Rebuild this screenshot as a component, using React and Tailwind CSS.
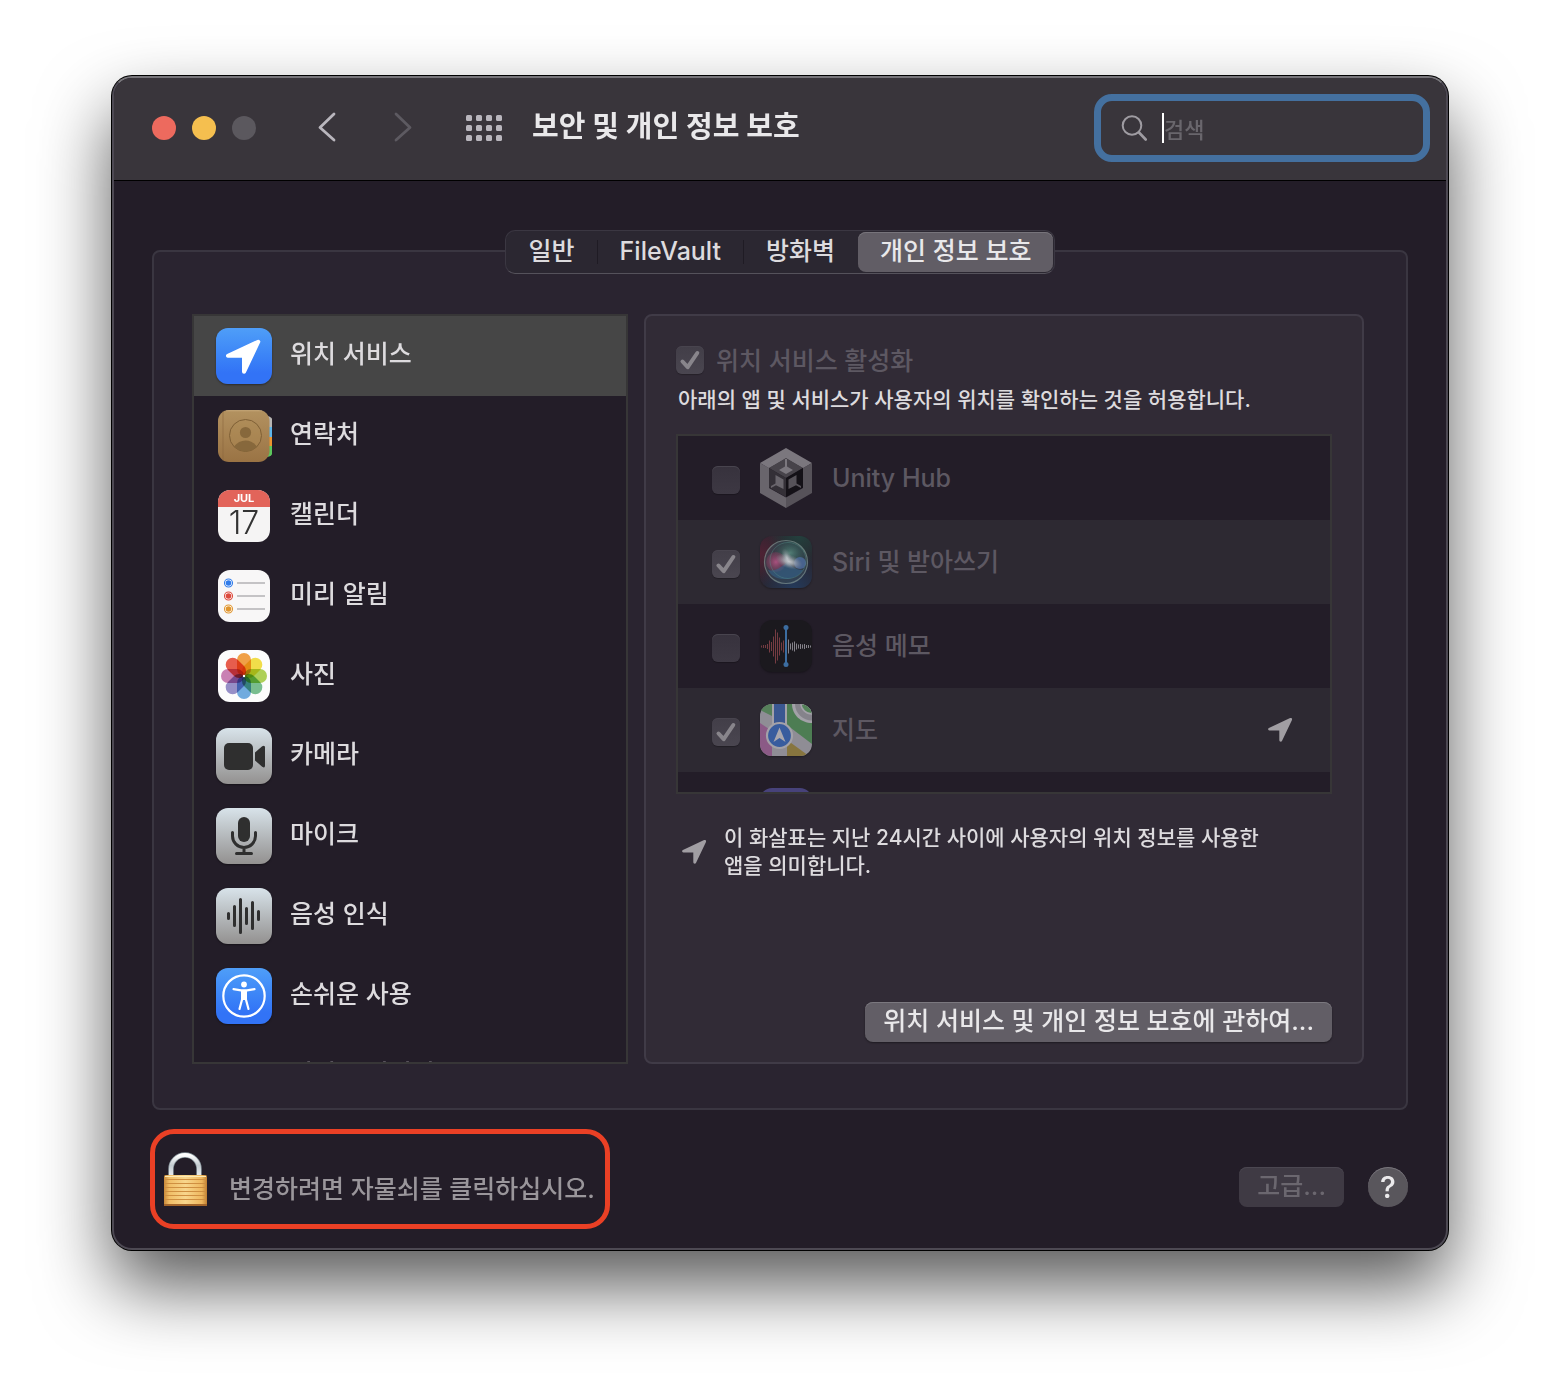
import { useState } from "react"
import clsx from "clsx"

const tabs = ["일반", "FileVault", "방화벽", "개인 정보 보호"]

const categories = [
  { name: "위치 서비스", Icon: LocationIcon },
  { name: "연락처", Icon: ContactsIcon },
  { name: "캘린더", Icon: CalendarIcon },
  { name: "미리 알림", Icon: RemindersIcon },
  { name: "사진", Icon: PhotosIcon },
  { name: "카메라", Icon: CameraIcon },
  { name: "마이크", Icon: MicrophoneIcon },
  { name: "음성 인식", Icon: SpeechIcon },
  { name: "손쉬운 사용", Icon: AccessibilityIcon },
  { name: "입력 모니터링", Icon: null },
]

const apps = [
  { name: "Unity Hub", allowed: false, recent: false, Icon: UnityIcon },
  { name: "Siri 및 받아쓰기", allowed: true, recent: false, Icon: SiriIcon },
  { name: "음성 메모", allowed: false, recent: false, Icon: VoiceMemoIcon },
  { name: "지도", allowed: true, recent: true, Icon: MapsIcon },
]

function App() {
  return (
    <div className="min-h-screen overflow-hidden bg-white px-28 pt-19 pb-37 font-['Inter','Noto_Sans_CJK_KR',sans-serif] text-[25px] leading-8 font-medium text-[#dddbde]">
      <div className="overflow-hidden rounded-[20px] border-2 border-[#4d4953] border-t-[#77757a] bg-[#231d28] shadow-[0_0_0_1px_#000,0_36px_72px_rgba(0,0,0,0.66)]">
        <TitleBar/>
        <main className="px-[38px] pt-[49px]">
          <Tabs/>
          <section className="-mt-6 flex gap-4 rounded-lg border-2 border-[#3a3641] bg-[#2a2430] pt-[62px] pr-[42px] pb-11 pl-[38px]">
            <CategoryList/>
            <LocationPanel/>
          </section>
        </main>
        <Footer/>
      </div>
    </div>
  )
}

function TitleBar() {
  return (
    <header className="flex items-center border-b border-black bg-[#39353b] pt-4 pr-4 pb-[18px] pl-[38px]">
      <div className="flex gap-4">
        <button aria-label="닫기" className="size-6 rounded-full bg-[#ed6a5e]"/>
        <button aria-label="최소화" className="size-6 rounded-full bg-[#f5bf4f]"/>
        <button aria-label="확대" className="size-6 rounded-full bg-[#5b585e]"/>
      </div>
      <nav className="ml-14 flex items-center gap-[45px]">
        <button aria-label="뒤로" className="text-[#b9b6bd]">
          <Chevron d="M22 2 8 15.500 22 28"/>
        </button>
        <button aria-label="앞으로" disabled className="text-[#5d5a61]">
          <Chevron d="M7 2 21 15.500 7 28"/>
        </button>
        <button aria-label="모두 보기" className="text-[#b9b6bd]">
          <svg viewBox="0 0 36 26" className="h-[26px] w-9" fill="currentColor">
            {[0, 10, 20].map(y => [0, 10, 20, 30].map(x => (
              <rect key={`${x}-${y}`} x={x} y={y} width="6" height="6" rx="1.5"/>
            )))}
          </svg>
        </button>
      </nav>
      <h1 className="ml-[30px] pb-0.5 text-[29px] leading-9 font-bold text-[#e9e8ea]">보안 및 개인 정보 보호</h1>
      <label className="ml-auto flex h-[68px] w-84 items-center rounded-[18px] border-[7px] border-[#44709f] pl-5">
        <svg viewBox="0 0 26 26" className="size-[26px] text-[#9f9ca2]" fill="none" stroke="currentColor" strokeLinecap="round">
          <circle cx="11" cy="10.500" r="9.300" strokeWidth="2"/>
          <path d="m18 17.500 6.700 7" strokeWidth="2.600"/>
        </svg>
        <span className="ml-[15px] h-[30px] w-0.5 bg-white"/>
        <input type="text" aria-label="검색" placeholder="검색" className="min-w-0 flex-1 bg-transparent pt-1 text-[22px] outline-none placeholder:text-[#69666c]"/>
      </label>
    </header>
  )
}

function Chevron({ d }) {
  return (
    <svg viewBox="0 0 32 32" className="size-8" fill="none" stroke="currentColor" strokeWidth="2.800" strokeLinecap="round" strokeLinejoin="round">
      <path d={d}/>
    </svg>
  )
}

function Tabs() {
  const [active, setActive] = useState("개인 정보 보호");

  return (
    <div role="tablist" className="relative mx-auto flex w-fit items-center rounded-[10px] border border-[#3b3742] border-b-[#55525b] bg-[#2b2731] p-px">
      {tabs.map((tab, i) => (
        <div key={tab} className="flex items-center">
          {i > 0 && <span className={clsx("h-6 w-px", tab !== active && tabs[i - 1] !== active && "bg-[#1f1b24]")}/>}
          <button
            role="tab"
            aria-selected={tab === active}
            onClick={() => setActive(tab)}
            className={clsx(
              "flex h-10 items-center px-[22px]",
              tab === active && "rounded-lg bg-[#615d65] text-[#e9e8ea] shadow-[inset_0_1px_0_#77747b]",
            )}
          >
            <span className="pb-0.5">{tab}</span>
          </button>
        </div>
      ))}
    </div>
  )
}

function CategoryList() {
  const [selected, setSelected] = useState("위치 서비스");

  return (
    <ul className="h-[750px] w-[436px] shrink-0 overflow-hidden border-2 border-[#373637] bg-[#231d28]">
      {categories.map(({ name, Icon }) => (
        <li key={name}>
          <button
            onClick={() => setSelected(name)}
            className={clsx("flex h-20 w-full items-center gap-[18px] pl-[22px] text-left", name === selected && "bg-[#464646]")}
          >
            <span className="flex size-14 items-center justify-center">{Icon && <Icon/>}</span>
            <span className="pb-1">{name}</span>
          </button>
        </li>
      ))}
    </ul>
  )
}

function LocationPanel() {
  return (
    <div className="flex min-w-0 flex-1 flex-col rounded-lg border-2 border-[#403b47] bg-[#312b36] px-[30px] pb-5">
      <label className="mt-[26px] flex h-9 items-center gap-3 text-[#5d5862]">
        <Checkbox checked/>
        <span className="pt-0.5">위치 서비스 활성화</span>
      </label>
      <p className="mt-2 pl-0.5 text-[21px] leading-7">아래의 앱 및 서비스가 사용자의 위치를 확인하는 것을 허용합니다.</p>
      <ul className="mt-5 h-[360px] overflow-hidden border-2 border-[#373637] bg-[#231d28]">
        {apps.map(app => <AppRow key={app.name} app={app}/>)}
        <li className="flex h-21 items-center pl-[82px]">
          <span className="size-[52px] rounded-xl bg-[#47427a]"/>
        </li>
      </ul>
      <div className="mt-[30px] flex items-center gap-4 pr-10 pl-1">
        <LocationArrow className="size-7 shrink-0 text-[#a19ea3]"/>
        <p className="text-[21px] leading-7 break-keep">이 화살표는 지난 24시간 사이에 사용자의 위치 정보를 사용한 앱을 의미합니다.</p>
      </div>
      <button className="mt-auto flex h-10 items-center self-end rounded-lg bg-[#625e66] px-[18px] text-[#e9e8ea] shadow-[inset_0_1px_0_#7b787f,0_1px_2px_rgba(0,0,0,0.4)]">
        <span className="pb-0.5">위치 서비스 및 개인 정보 보호에 관하여...</span>
      </button>
    </div>
  )
}

function AppRow({ app }) {
  const { name, allowed, recent, Icon } = app;

  return (
    <li className="flex h-21 items-center pr-9 pl-[34px] even:bg-[#2d2932]">
      <label className="flex items-center text-[#5d5862]">
        <span className="pt-1"><Checkbox checked={allowed}/></span>
        <span className="mr-5 ml-5 flex w-[52px] justify-center"><Icon/></span>
        <span>{name}</span>
      </label>
      {recent && <LocationArrow className="ml-auto size-7 text-[#a19ea3]"/>}
    </li>
  )
}

function Checkbox({ checked }) {
  return (
    <span className="relative block size-7">
      <input
        type="checkbox"
        defaultChecked={checked}
        disabled
        className="peer block size-7 appearance-none rounded-md bg-linear-to-b from-[#37323d] to-[#3d3843] shadow-[inset_0_1px_0_#48444e,0_1px_1px_rgba(0,0,0,0.25)] checked:from-[#423e48] checked:to-[#4a4650]"
      />
      <svg viewBox="0 0 28 28" className="pointer-events-none absolute inset-0 hidden size-7 text-[#88858b] peer-checked:block" fill="none" stroke="currentColor" strokeWidth="4" strokeLinecap="round" strokeLinejoin="round">
        <path d="m6.500 15.500 5.200 5.700L21.300 7"/>
      </svg>
    </span>
  )
}

function Footer() {
  return (
    <footer className="flex items-center pt-[19px] pr-[38px] pb-[19px] pl-9">
      <button className="flex h-25 items-center rounded-[24px] border-5 border-[#ea4025] pr-2.5 pl-[9px] text-[#9a969b]">
        <LockIcon/>
        <span className="ml-[22px] pt-5">변경하려면 자물쇠를 클릭하십시오.</span>
      </button>
      <div className="mt-4 ml-auto flex items-center gap-6">
        <button disabled className="flex h-10 items-center rounded-lg bg-[#3f3a44] px-[18px] text-[#6b676f] shadow-[inset_0_1px_0_#4b4751]">
          <span className="pb-0.5">고급...</span>
        </button>
        <button aria-label="도움말" className="size-10 rounded-full bg-[#59565c] text-[30px] leading-10 text-[#ebeaec] shadow-[inset_0_1px_0_#77747b]">?</button>
      </div>
    </footer>
  )
}

function LocationArrow({ className }) {
  return (
    <svg viewBox="7 9 40 40" className={className} fill="currentColor" stroke="currentColor" strokeWidth="4" strokeLinejoin="round">
      <path d="M42.300 13.700 12 27.800H28V43.800Z"/>
    </svg>
  )
}

function Tile({ blue, children }) {
  return (
    <span className={clsx(
      "block size-14 overflow-hidden rounded-xl bg-linear-to-b text-[#2f2f2f] shadow-[0_1px_2px_rgba(0,0,0,0.4)]",
      blue ? "from-[#4f9ef8] to-[#3273f6] to-80%" : "from-[#d8e3ea] to-[#939190]",
    )}>
      <svg viewBox="0 0 56 56" className="size-14">{children}</svg>
    </span>
  )
}

function LocationIcon() {
  return (
    <Tile blue>
      <path d="M42.300 13.700 12 27.800H28V43.800Z" fill="#fff" stroke="#fff" strokeWidth="4" strokeLinejoin="round"/>
    </Tile>
  )
}

function ContactsIcon() {
  return (
    <svg viewBox="0 0 56 56" className="size-14">
      <defs>
        <linearGradient id="leather" x1="0" y1="0" x2="0" y2="1">
          <stop offset="0" stopColor="#b39260"/>
          <stop offset="1" stopColor="#9a7344"/>
        </linearGradient>
        <clipPath id="book-tabs"><rect x="40" y="8" width="17" height="41" rx="6"/></clipPath>
      </defs>
      <g clipPath="url(#book-tabs)">
        <path fill="#b8b6b4" d="M50 6h7v14h-7z"/>
        <path fill="#5eb5ea" d="M50 19h7v10h-7z"/>
        <path fill="#ec942f" d="M50 29h7v10h-7z"/>
        <path fill="#5cc65c" d="M50 38h7v12h-7z"/>
      </g>
      <rect x="2" y="2" width="51.500" height="52" rx="11" fill="url(#leather)"/>
      <path d="M7 3.500v49" stroke="#8a673b" strokeOpacity=".4" strokeWidth="1.500"/>
      <path d="M10 2.800h36" stroke="#d0b68a" strokeOpacity=".6"/>
      <circle cx="29.500" cy="27.500" r="16" fill="#b08d56" fillOpacity=".4" stroke="#7f6036"/>
      <circle cx="29.500" cy="24.500" r="5.600" fill="#87683c"/>
      <path d="M18 38.500c3-4 7-6 11.500-6s8.500 2 11.500 6a16 16 0 0 1-23 0Z" fill="#87683c"/>
    </svg>
  )
}

function CalendarIcon() {
  return (
    <svg viewBox="0 0 52 52" className="size-[52px] rounded-xl">
      <rect width="52" height="52" fill="#f5f4f4"/>
      <rect width="52" height="17" fill="#e2645a"/>
      <text x="26" y="12" textAnchor="middle" fontSize="11" fontWeight="700" fill="#fff" className="font-['Inter',sans-serif]">JUL</text>
      <text x="26" y="43.500" textAnchor="middle" fontSize="32" fontWeight="300" fill="#333" className="font-['Inter',sans-serif]">17</text>
    </svg>
  )
}

function RemindersIcon() {
  const dots = [{ y: 13, color: "#2f7bea" }, { y: 26, color: "#dc4a3d" }, { y: 39, color: "#e0952d" }];

  return (
    <svg viewBox="0 0 52 52" className="size-[52px] rounded-xl">
      <rect width="52" height="52" fill="#f8f7f7"/>
      {dots.map(({ y, color }) => (
        <g key={y}>
          <circle cx="10.500" cy={y} r="4" fill="#fff" stroke={color} strokeWidth="1.100"/>
          <circle cx="10.500" cy={y} r="2.800" fill={color}/>
          <path d={`M19 ${y}h28`} stroke="#c4c3c5" strokeWidth="1.800"/>
        </g>
      ))}
    </svg>
  )
}

function PhotosIcon() {
  const petals = ["#f29a38", "#f3dd3c", "#a9cf4b", "#6fbb88", "#65a6de", "#8f88c6", "#c877af", "#e8503f"];

  return (
    <svg viewBox="0 0 52 52" className="size-[52px] rounded-xl bg-[#fcfcfc]">
      {petals.map((color, i) => (
        <rect
          key={color}
          x="19"
          y="3"
          width="14"
          height="23"
          rx="7"
          fill={color}
          fillOpacity=".92"
          transform={`rotate(${i * 45} 26 26)`}
          className="mix-blend-multiply"
        />
      ))}
      <circle cx="26" cy="26" r="1.200" fill="#fff"/>
    </svg>
  )
}

function CameraIcon() {
  return (
    <Tile>
      <rect x="8" y="15" width="29" height="27" rx="5" fill="currentColor"/>
      <path d="M39 24.500 46.200 18.300Q49 16.500 49 19.500V37.500Q49 40.500 46.200 38.700L39 32.500Z" fill="currentColor"/>
    </Tile>
  )
}

function MicrophoneIcon() {
  return (
    <Tile>
      <rect x="22" y="9" width="12" height="25" rx="6" fill="currentColor"/>
      <path d="M16.500 24.500v3.500a11.500 11.500 0 0 0 23 0v-3.500M28 39.500v5.500M20.500 45.500h15" fill="none" stroke="currentColor" strokeWidth="3" strokeLinecap="round"/>
    </Tile>
  )
}

function SpeechIcon() {
  return (
    <Tile>
      <path d="M12.500 25.500v5M18.500 18.500v19M24.500 11.500v33M30.500 20.500v15M36.500 14.500v26M42.500 23.500v8" stroke="currentColor" strokeWidth="3" strokeLinecap="round"/>
    </Tile>
  )
}

function AccessibilityIcon() {
  return (
    <Tile blue>
      <circle cx="28" cy="28" r="20.700" fill="none" stroke="#fff" strokeWidth="2.200"/>
      <circle cx="28" cy="16.500" r="2.900" fill="#fff"/>
      <path d="M17.500 21.200 25 22.300h6l7.500-1.100M26.200 23v8L23.500 41M29.800 23v8L32.500 41" fill="none" stroke="#fff" strokeWidth="2.200" strokeLinecap="round" strokeLinejoin="round"/>
      <path d="M25 22h6v10h-6z" fill="#fff"/>
    </Tile>
  )
}

function UnityIcon() {
  return (
    <svg viewBox="0 0 52 60" className="h-[60px] w-[52px]">
      <path fill="#7b777e" d="m26 0 26 15-9 5.200L26 10.500 9 20.200 0 15Z"/>
      <path fill="#69656c" d="m0 15 9 5v20l17 9.500V60L0 45Z"/>
      <path fill="#565259" d="m52 15-9 5v20l-17 9.500V60l26-15Z"/>
      <path fill="#47434a" d="m9 20 17-10 17 10-17 10Z"/>
      <path fill="#343037" d="m9 20 17 10v19L9 39.500Z"/>
      <path fill="#141117" d="m43 20-17 10v19l17-9.500Z"/>
      <path fill="#7b777e" d="M25 11h2v7.500l6 3.500-7 4-7-4 6-3.500Z"/>
      <path fill="#69656c" d="m15.500 27 8 4.500V41l-7.500-3.700-5 2.700v-2l4.500-2.500Z"/>
      <path fill="#565259" d="m36.500 27-8 4.500V41l7.500-3.700 5 2.700v-2l-4.500-2.500Z"/>
    </svg>
  )
}

function SiriIcon() {
  return (
    <svg viewBox="0 0 52 52" className="size-[52px] rounded-xl shadow-[0_1px_2px_rgba(0,0,0,0.3)]">
      <defs>
        <radialGradient id="siri-red" cx="0" cy=".35" r=".6">
          <stop offset="0" stopColor="#4f2234"/>
          <stop offset="1" stopColor="#4f2234" stopOpacity="0"/>
        </radialGradient>
        <radialGradient id="siri-green" cx=".75" cy="0" r=".6">
          <stop offset="0" stopColor="#23403d"/>
          <stop offset="1" stopColor="#23403d" stopOpacity="0"/>
        </radialGradient>
        <radialGradient id="siri-blue" cx=".65" cy="1" r=".7">
          <stop offset="0" stopColor="#243a5a"/>
          <stop offset="1" stopColor="#243a5a" stopOpacity="0"/>
        </radialGradient>
        <radialGradient id="siri-pink">
          <stop offset="0" stopColor="#a8527f"/>
          <stop offset="1" stopColor="#8a3c5c" stopOpacity=".35"/>
        </radialGradient>
        <radialGradient id="siri-teal">
          <stop offset="0" stopColor="#65a08f"/>
          <stop offset="1" stopColor="#2f6b5b" stopOpacity=".1"/>
        </radialGradient>
        <radialGradient id="siri-glow">
          <stop offset="0" stopColor="#d2d6da"/>
          <stop offset=".35" stopColor="#b5b9c0" stopOpacity=".75"/>
          <stop offset="1" stopColor="#8a8e95" stopOpacity="0"/>
        </radialGradient>
      </defs>
      <rect width="52" height="52" fill="#29252f"/>
      <rect width="52" height="52" fill="url(#siri-red)"/>
      <rect width="52" height="52" fill="url(#siri-green)"/>
      <rect width="52" height="52" fill="url(#siri-blue)"/>
      <circle cx="26" cy="26" r="21" fill="#3b4a55" fillOpacity=".6"/>
      <ellipse cx="30" cy="17" rx="15" ry="12" fill="url(#siri-teal)" fillOpacity=".65"/>
      <ellipse cx="16" cy="26" rx="10" ry="10" fill="url(#siri-pink)"/>
      <circle cx="40" cy="27" r="6" fill="#4d6c9e" fillOpacity=".8"/>
      <path d="M8 34c8 2 14-4 20-8 5 6 9 8 15 8-5 10-28 14-35 0Z" fill="#34628b" fillOpacity=".6"/>
      <ellipse cx="29" cy="25.500" rx="14" ry="7" fill="url(#siri-glow)" transform="rotate(18 29 25.500)"/>
      <ellipse cx="27" cy="22" rx="5" ry="10" fill="url(#siri-glow)" fillOpacity=".7" transform="rotate(-20 27 22)"/>
      <circle cx="26" cy="26" r="21.500" fill="none" stroke="#7f9390" strokeOpacity=".7" strokeWidth="1.200"/>
      <circle cx="28" cy="24.500" r="18" fill="none" stroke="#58908a" strokeOpacity=".5" strokeWidth=".8"/>
    </svg>
  )
}

function VoiceMemoIcon() {
  // half heights of the bars on each side of the playhead
  const recorded = [1, 1.5, 1.5, 2.5, 6, 4.5, 10, 17, 14, 9, 4, 6];
  const upcoming = [7, 3, 4, 5, 3, 2, 2.5, 2, 2.5, 1.5, 1.5, 1];

  return (
    <svg viewBox="0 0 52 52" className="size-[52px] rounded-xl bg-[#1b191e] shadow-[0_1px_2px_rgba(0,0,0,0.3)]">
      {recorded.map((h, i) => (
        <path key={i} d={`M${1.5 + i * 2} ${26.500 - h}v${h * 2}`} stroke="#763c42"/>
      ))}
      {upcoming.map((h, i) => (
        <path key={i} d={`M${28.500 + i * 2} ${26.500 - h}v${h * 2}`} stroke="#85828a"/>
      ))}
      <path d="M26 8v37" stroke="#3c6da0" strokeWidth="2"/>
      <circle cx="26" cy="7.500" r="2.500" fill="#3c6da0"/>
      <circle cx="26" cy="44.500" r="2.500" fill="#3c6da0"/>
    </svg>
  )
}

function MapsIcon() {
  return (
    <svg viewBox="0 0 52 52" className="size-[52px] rounded-xl shadow-[0_1px_2px_rgba(0,0,0,0.3)]">
      <rect width="52" height="52" fill="#8f8d95"/>
      <path d="M0 0h12v12L0 6Z" fill="#56805a"/>
      <path d="M0 19 12 27v25H0Z" fill="#8b5a86"/>
      <path d="M27 0h25v40L27 21Z" fill="#4d7d53"/>
      <path d="M27 36 49 52H27Z" fill="#87753f"/>
      <path d="M52 0v19C41 19 32 11 32 0Z" fill="#a3a1a8"/>
      <path d="M52 0v16.500C43 16.500 35 9 35 0Z" fill="#85838b"/>
      <path d="M52 0v10C46 10 41 5 41 0Z" fill="#55835a" stroke="#a3a1a8" strokeWidth="1.500"/>
      <path d="M12 0h15v24H12Z" fill="#a3a1a8"/>
      <path d="M14 0h11v24H14Z" fill="#3a5791"/>
      <circle cx="19.500" cy="31.500" r="12.500" fill="#385c9e" stroke="#a3a1a8" strokeWidth="2.200"/>
      <path d="m19.500 23.500 6 14.500-6-4-6 4Z" fill="#a9a7ae"/>
    </svg>
  )
}

function LockIcon() {
  return (
    <svg viewBox="0 0 43 55" className="h-[55px] w-[43px]">
      <defs>
        <linearGradient id="brass" x1="0" y1="0" x2="1" y2="0">
          <stop offset="0" stopColor="#c9893a"/>
          <stop offset=".12" stopColor="#f0bd66"/>
          <stop offset=".5" stopColor="#f8d68c"/>
          <stop offset=".88" stopColor="#eeb75e"/>
          <stop offset="1" stopColor="#c08033"/>
        </linearGradient>
        <linearGradient id="steel" x1="0" y1="0" x2="0" y2="1">
          <stop offset="0" stopColor="#fff"/>
          <stop offset=".45" stopColor="#c3cbd0"/>
          <stop offset="1" stopColor="#eef2f4"/>
        </linearGradient>
      </defs>
      <path d="M7 26V17a14 14 0 0 1 28 0v9" fill="none" stroke="#86939a" strokeWidth="5.500"/>
      <path d="M7 26V17a14 14 0 0 1 28 0v9" fill="none" stroke="url(#steel)" strokeWidth="4"/>
      <rect y="23" width="43" height="31" rx="1.500" fill="url(#brass)"/>
      <path d="M1 27.500h41M1 31.500h41M1 35.500h41M1 39.500h41M1 43.500h41M1 47.500h41" stroke="#cf8f41" strokeWidth="1.200"/>
      <path d="M1 24.500h41" stroke="#fdeab5"/>
      <path d="M0 53h43" stroke="#a3652a" strokeWidth="2"/>
    </svg>
  )
}

export default App
